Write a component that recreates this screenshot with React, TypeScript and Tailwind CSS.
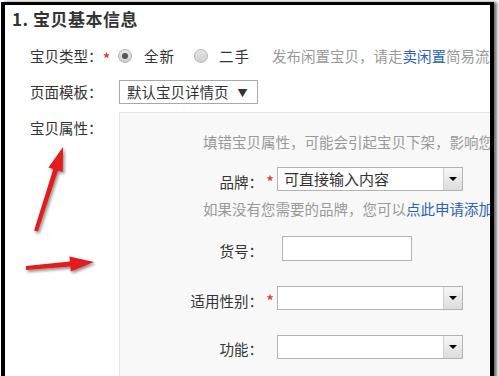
import React from 'react';

const FONT = '"Noto Sans CJK SC", "Noto Sans", sans-serif';

function arrowPoints(x1: number, y1: number, x2: number, y2: number, shaft: number, headW: number, headL: number) {
  const dx = x2 - x1;
  const dy = y2 - y1;
  const len = Math.hypot(dx, dy);
  const ux = dx / len;
  const uy = dy / len;
  const nx = -uy;
  const ny = ux;
  const bx = x2 - ux * headL;
  const by = y2 - uy * headL;
  const p = (x: number, y: number) => `${x.toFixed(1)},${y.toFixed(1)}`;
  return [
    p(x1 + nx * shaft * 0.4, y1 + ny * shaft * 0.4),
    p(bx + nx * shaft / 2, by + ny * shaft / 2),
    p(bx + nx * headW / 2, by + ny * headW / 2),
    p(x2, y2),
    p(bx - nx * headW / 2, by - ny * headW / 2),
    p(bx - nx * shaft / 2, by - ny * shaft / 2),
    p(x1 - nx * shaft * 0.4, y1 - ny * shaft * 0.4),
  ].join(' ');
}

function Radio({ checked }: { checked?: boolean }) {
  return (
    <span className="grid h-[14px] w-[14px] shrink-0 place-items-center rounded-full border border-[#b5b5b5] bg-gradient-to-b from-[#e6e6e6] to-[#cfcfcf]">
      {checked && <span className="h-[6px] w-[6px] rounded-full bg-[#555]" />}
    </span>
  );
}

function Star() {
  return <span className="text-[14px] font-bold leading-none text-[#e4393c]">*</span>;
}

function ComboBox({ value }: { value?: string }) {
  return (
    <div className="flex h-[24px] w-[186px] shrink-0 items-stretch border border-[#b3b3b3] bg-white">
      <span className="flex-1 truncate pl-[6px] text-[15px] leading-[22px] text-[#333]">{value}</span>
      <span className="grid w-[19px] place-items-center border-l border-[#cfcfcf] bg-gradient-to-b from-[#f7f7f7] to-[#dcdcdc]">
        <span className="h-0 w-0 border-x-[4px] border-t-[4px] border-x-transparent border-t-black" />
      </span>
    </div>
  );
}

function FieldRow({ label, required, children, className }: { label: string; required?: boolean; children: React.ReactNode; className?: string }) {
  return (
    <div className={`flex items-center ${className ?? ''}`}>
      <span className="w-[143px] shrink-0 whitespace-nowrap pt-[5px] text-right text-[14.5px] text-[#333]">{label}</span>
      <span className="flex w-[14px] shrink-0 justify-center pt-[4px]">{required && <Star />}</span>
      {children}
    </div>
  );
}

export default function App() {
  return (
    <div className="relative h-[376px] w-[499px] overflow-hidden bg-white" style={{ fontFamily: FONT }}>
      <div className="ml-[1px] mt-[2px] h-[420px] w-[493px] overflow-hidden border-x-[4px] border-t-[3px] border-black shadow-[3px_0_3px_rgba(0,0,0,0.55)]">
        <h1 className="flex h-[28px] items-center pl-[7px] text-[17px] font-bold tracking-[0.5px] text-[#333]">1. 宝贝基本信息</h1>

        <div className="mt-[11px] flex h-[24px] items-center whitespace-nowrap pl-[25px] text-[14.5px] text-[#333]">
          <span className="w-[73px] shrink-0">宝贝类型：</span>
          <span className="w-[15px] shrink-0 pt-[3px]"><Star /></span>
          <Radio checked />
          <span className="ml-[12px] tracking-[1px]">全新</span>
          <span className="ml-[19px]"><Radio /></span>
          <span className="ml-[11px] tracking-[1px]">二手</span>
          <span className="ml-[22px] text-[#999]">
            发布闲置宝贝，请走<span className="text-[#2d5fb4]">卖闲置</span>简易流程
          </span>
        </div>

        <div className="mt-[12px] flex h-[24px] items-center pl-[25px] text-[14.5px] text-[#333]">
          <span className="w-[73px] shrink-0">页面模板：</span>
          <div className="ml-[16px] flex h-[24px] w-[139px] shrink-0 items-center whitespace-nowrap border border-[#a9a9a9] bg-white pl-[7px] text-[14.5px]">
            默认宝贝详情页<span className="ml-[9px] text-[10px]">▼</span>
          </div>
        </div>

        <div className="mt-[8px] flex pl-[25px]">
          <span className="w-[89px] shrink-0 whitespace-nowrap pt-[5px] text-[14.5px] text-[#333]">宝贝属性：</span>
          <div className="h-[300px] w-[400px] shrink-0 border border-[#e6e6e6] bg-[#f8f8f8]">
            <p className="whitespace-nowrap pl-[83px] pt-[19px] text-[14.5px] leading-[20px] text-[#999]">
              填错宝贝属性，可能会引起宝贝下架，影响您的正常销售
            </p>
            <FieldRow label="品牌：" required className="mt-[14px]">
              <ComboBox value="可直接输入内容" />
            </FieldRow>
            <p className="mt-[6px] whitespace-nowrap pl-[83px] text-[14.5px] leading-[20px] text-[#999]">
              如果没有您需要的品牌，您可以<span className="text-[#2d5fb4]">点此申请添加品牌</span>
            </p>
            <FieldRow label="货号：" className="mt-[16px]">
              <div className="ml-[5px] h-[25px] w-[130px] shrink-0 border border-[#b3b3b3] bg-white" />
            </FieldRow>
            <FieldRow label="适用性别：" required className="mt-[23px]">
              <ComboBox />
            </FieldRow>
            <FieldRow label="功能：" className="mt-[22px]">
              <ComboBox />
            </FieldRow>
            <FieldRow label="" className="mt-[21px]">
              <ComboBox />
            </FieldRow>
          </div>
        </div>
      </div>

      <svg className="pointer-events-none absolute left-0 top-0" width="499" height="376">
        <defs>
          <filter id="sh" x="-20%" y="-20%" width="140%" height="140%">
            <feDropShadow dx="1.5" dy="2" stdDeviation="1.5" floodColor="#000" floodOpacity="0.45" />
          </filter>
        </defs>
        <polygon points={arrowPoints(36, 231, 63, 147, 5, 15, 24)} fill="#e31a1a" filter="url(#sh)" />
        <polygon points={arrowPoints(26, 268, 94, 262, 5, 15, 24)} fill="#e31a1a" filter="url(#sh)" />
      </svg>
    </div>
  );
}
